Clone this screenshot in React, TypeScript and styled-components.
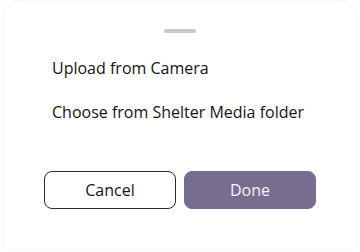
import React from "react";
import styled, { createGlobalStyle } from "styled-components";

const Global = createGlobalStyle`
  html, body { margin: 0; padding: 0; background: #ffffff; }
  body { font-family: "Open Sans", "Noto Sans", sans-serif; }
  * { box-sizing: border-box; }
`;

const Page = styled.div`
  width: 360px;
  height: 252px;
  padding: 1px 4px 2px 4px;
  background: #ffffff;
`;

const Sheet = styled.div`
  height: 100%;
  background: #ffffff;
  border-radius: 16px 16px 2px 2px;
  box-shadow: 0 0 2px rgba(0, 0, 0, 0.12);
  display: flex;
  flex-direction: column;
  align-items: stretch;
  padding-top: 28px;
`;

const Handle = styled.div`
  align-self: center;
  width: 32px;
  height: 4px;
  border-radius: 2px;
  background: #c6c6ca;
`;

const Options = styled.div`
  display: flex;
  flex-direction: column;
  padding: 24px 0 0 48px;
  gap: 22px;
`;

const Option = styled.div`
  font-size: 16px;
  line-height: 22px;
  color: #141414;
`;

const Actions = styled.div`
  display: flex;
  gap: 8px;
  padding: 0 40px;
  margin-top: 48px;
`;

const Button = styled.button<{ $primary?: boolean }>`
  flex: 1;
  height: 38px;
  border-radius: 8px;
  font-family: "Open Sans", "Noto Sans", sans-serif;
  font-size: 16px;
  font-weight: ${(p) => (p.$primary ? 500 : 400)};
  cursor: pointer;
  border: 1px solid ${(p) => (p.$primary ? "#786d8f" : "#2a2a2a")};
  background: ${(p) => (p.$primary ? "#786d8f" : "#ffffff")};
  color: ${(p) => (p.$primary ? "#f6f4f9" : "#141414")};
`;

export default function App() {
  return (
    <>
      <Global />
      <Page>
        <Sheet>
          <Handle />
          <Options>
            <Option>Upload from Camera</Option>
            <Option>Choose from Shelter Media folder</Option>
          </Options>
          <Actions>
            <Button>Cancel</Button>
            <Button $primary>Done</Button>
          </Actions>
        </Sheet>
      </Page>
    </>
  );
}
